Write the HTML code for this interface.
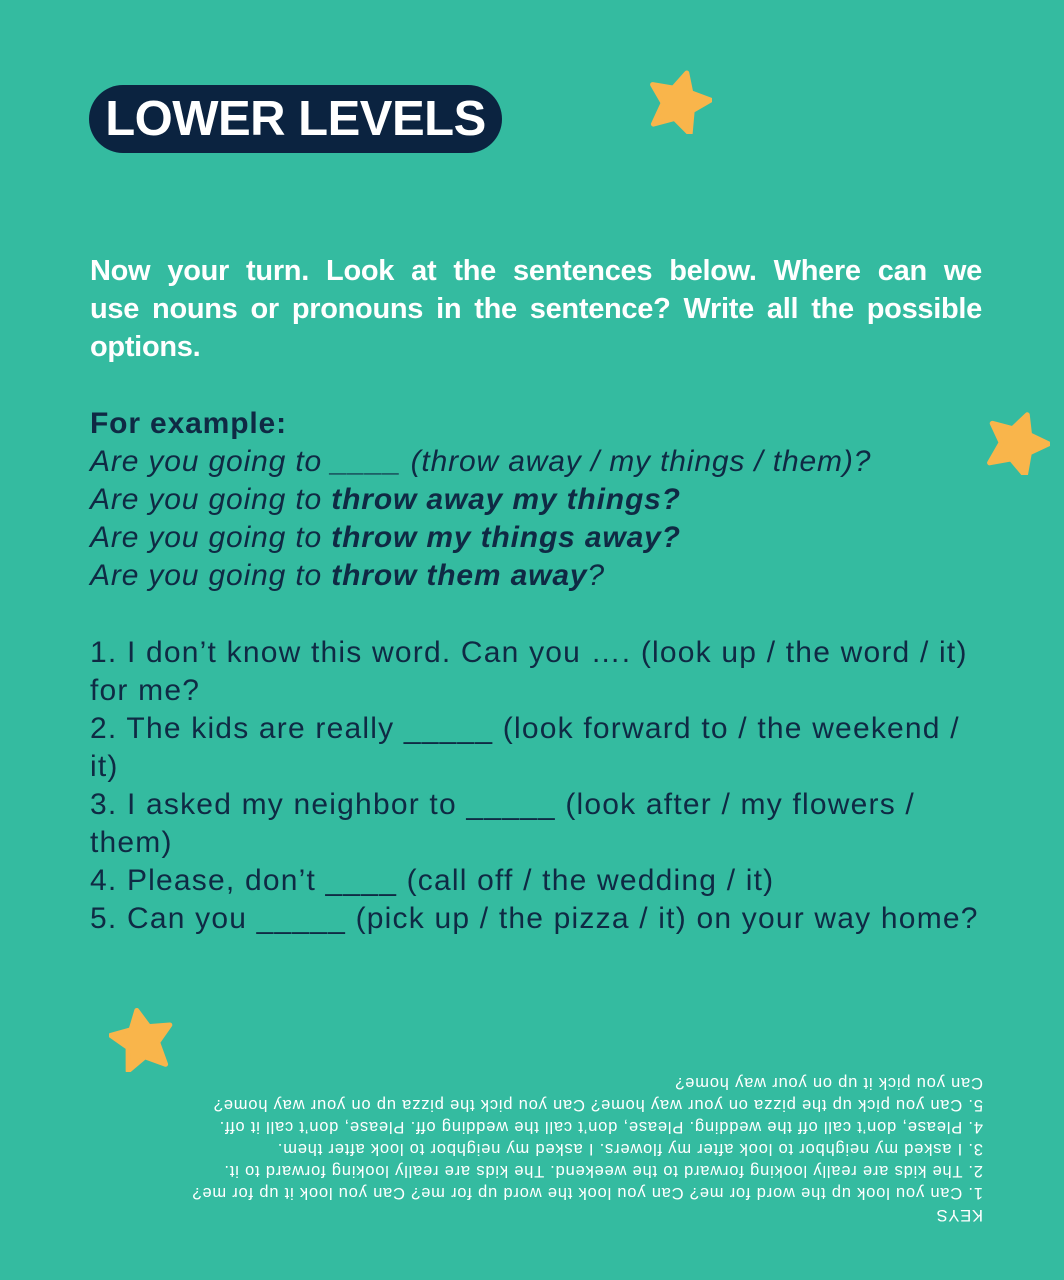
<!DOCTYPE html>
<html><head><meta charset="utf-8"><style>
body{margin:0;}
#p{position:relative;width:1064px;height:1280px;background:#34bba0;overflow:hidden;font-family:"Liberation Sans",sans-serif;}
.pill{position:absolute;left:89px;top:85px;width:413px;height:68px;background:#0b2340;border-radius:34px;color:#fff;font-weight:bold;font-size:49px;line-height:68px;text-align:center;letter-spacing:-0.5px;}
.star{position:absolute;}
.intro{position:absolute;left:90px;top:252px;width:892px;color:#fff;font-weight:bold;font-size:29px;line-height:38px;letter-spacing:-0.3px;}
.intro div{white-space:nowrap;}
.j{text-align:justify;text-align-last:justify;}
.ex{position:absolute;left:90px;top:405px;width:960px;color:#0f2a44;font-size:30px;line-height:38px;letter-spacing:0.85px;white-space:nowrap;}
.ex i{font-style:italic;}
.list{position:absolute;left:90px;top:634px;width:960px;color:#0f2a44;font-size:30px;line-height:38px;letter-spacing:1.2px;white-space:nowrap;}
.keys{position:absolute;left:90px;top:1060px;width:893px;height:166px;transform:rotate(180deg);color:#fff;font-size:16.5px;line-height:22px;letter-spacing:0.8px;white-space:nowrap;}
</style></head><body><div id="p">
<div class="pill">LOWER LEVELS</div>
<svg class="star" style="left:646px;top:70px" width="66" height="64" viewBox="-32 -32 64 64"><polygon points="0,-30 9,-12 30,-10 15,5 19,28 0,17 -19,28 -15,5 -30,-10 -9,-12" fill="#f9b54b" stroke="#f9b54b" stroke-width="5" stroke-linejoin="round" transform="rotate(15)"/></svg>
<svg class="star" style="left:984px;top:411px" width="66" height="64" viewBox="-32 -32 64 64"><polygon points="0,-30 9,-12 30,-10 15,5 19,28 0,17 -19,28 -15,5 -30,-10 -9,-12" fill="#f9b54b" stroke="#f9b54b" stroke-width="5" stroke-linejoin="round" transform="rotate(20)"/></svg>
<svg class="star" style="left:109px;top:1008px" width="66" height="64" viewBox="-32 -32 64 64"><polygon points="0,-30 9,-12 30,-10 15,5 19,28 0,17 -19,28 -15,5 -30,-10 -9,-12" fill="#f9b54b" stroke="#f9b54b" stroke-width="5" stroke-linejoin="round" transform="rotate(-10)"/></svg>
<div class="intro"><div class="j">Now your turn. Look at the sentences below. Where can we</div><div class="j">use nouns or pronouns in the sentence? Write all the possible</div><div>options.</div></div>
<div class="ex"><b>For example:</b><br><i>Are you going to ____ (throw away / my things / them)?</i><br><i>Are you going to <b>throw away my things?</b></i><br><i>Are you going to <b>throw my things away?</b></i><br><i>Are you going to <b>throw them away</b>?</i></div>
<div class="list">1. I don’t know this word. Can you …. (look up / the word / it)<br>for me?<br>2. The kids are really _____ (look forward to / the weekend /<br>it)<br>3. I asked my neighbor to _____ (look after / my flowers /<br>them)<br>4. Please, don’t ____ (call off / the wedding / it)<br>5. Can you _____ (pick up / the pizza / it) on your way home?</div>
<div class="keys">KEYS<br>1. Can you look up the word for me? Can you look the word up for me? Can you look it up for me?<br>2. The kids are really looking forward to the weekend. The kids are really looking forward to it.<br>3. I asked my neighbor to look after my flowers. I asked my neighbor to look after them.<br>4. Please, don’t call off the wedding. Please, don’t call the wedding off. Please, don’t call it off.<br>5. Can you pick up the pizza on your way home? Can you pick the pizza up on your way home?<br>Can you pick it up on your way home?</div>
</div></body></html>
